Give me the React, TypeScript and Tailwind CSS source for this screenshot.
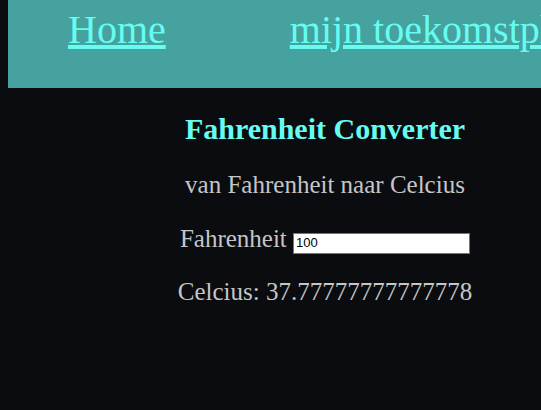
export default function App() {
  return (
    <div className="min-h-[410px] w-[541px] overflow-hidden bg-[#0b0c10] font-['Liberation_Serif',serif] text-[#c5c6c7]">
      <div className="w-[650px]">
        {/* Navigatie */}
        <nav className="ml-2 flex h-[88px] w-[700px] items-start gap-[124px] bg-[#45a29e] pl-[60px] pt-[7px] text-[40px] leading-[46px] text-[#66fcf1]">
          <a href="#" className="underline">Home</a>
          <a href="#" className="whitespace-nowrap underline">mijn toekomstplannen</a>
        </nav>

        {/* Converter */}
        <div className="pt-[14px] text-center">
          <h1 className="text-[30px] font-bold leading-[54px] text-[#66fcf1]">Fahrenheit Converter</h1>
          <p className="mt-[2px] text-[25px] leading-[54px]">van Fahrenheit naar Celcius</p>
          <p className="text-[25px] leading-[54px]">
            Fahrenheit{" "}
            <input
              type="text"
              defaultValue="100"
              className="h-[21px] w-[177px] border border-[#767676] bg-white px-[2px] font-['Liberation_Sans',sans-serif] text-[13px] text-black"
            />
          </p>
          <p className="text-[25px] leading-[52px]">Celcius: 37.77777777777778</p>
        </div>
      </div>
    </div>
  );
}
